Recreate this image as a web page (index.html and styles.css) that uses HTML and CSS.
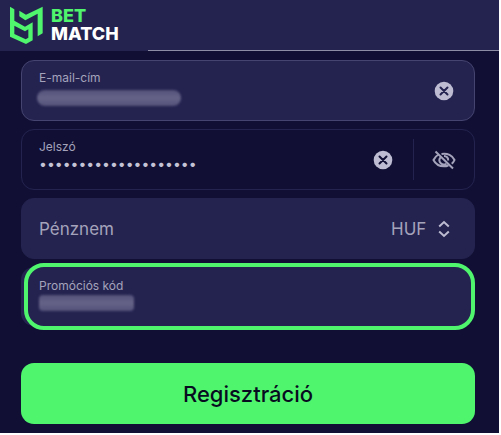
FILE: index.html
```html
<!DOCTYPE html>
<html lang="hu">
<head>
<meta charset="utf-8">
<meta name="viewport" content="width=device-width, initial-scale=1">
<title>BetMatch – Regisztráció</title>
<link rel="stylesheet" href="styles.css">
</head>
<body>
<div class="page">
  <header class="header">
    <a class="brand" href="#" aria-label="BetMatch">
      <svg class="brand-mark" viewBox="24 15 108 117" aria-hidden="true">
        <path fill-rule="evenodd" d="M30 17L43 25V59L75 77L98 64V118L78 129L30 107ZM43 74V99L77 115L85 110V85L75 91Z"/>
        <path d="M58 29L78 41L128 17V97L113 106V38L76 58L58 46Z"/>
      </svg>
      <span class="brand-name"><span class="brand-bet">BET</span><span>MATCH</span></span>
    </a>
  </header>
  <form class="form">
    <div class="field field-outlined">
      <div class="field-main">
        <label class="label" for="email">E-mail-cím</label>
        <div class="masked"><input class="input" id="email" type="text" value=""><span class="smudge smudge-email"></span></div>
      </div>
      <button class="icon-button" type="button" aria-label="Törlés">
        <svg class="icon-clear" viewBox="0 0 20 20"><circle cx="10" cy="10" r="9.3"/><path d="M6.500 6.500l7 7M13.500 6.500l-7 7"/></svg>
      </button>
    </div>
    <div class="field field-dark">
      <div class="field-main">
        <label class="label" for="password">Jelszó</label>
        <input class="input password" id="password" type="password" value="12345678901234567890">
      </div>
      <button class="icon-button" type="button" aria-label="Törlés">
        <svg class="icon-clear icon-clear-dark" viewBox="0 0 20 20"><circle cx="10" cy="10" r="9.3"/><path d="M6.500 6.500l7 7M13.500 6.500l-7 7"/></svg>
      </button>
      <span class="divider"></span>
      <button class="icon-button" type="button" aria-label="Jelszó megjelenítése">
        <svg class="icon-eye" viewBox="0 0 24 20"><path d="M6.500 4.500C4.200 5.800 2.500 7.700 1.500 10c2 4 6 6.300 10.500 6.300 1.500 0 3-.3 4.300-.8M9.500 3.900C15.500 2.800 20.600 5.500 22.500 10c-.6 1.500-1.500 2.700-2.800 3.700M8.300 7.700a4.300 4.300 0 0 0 6 6M12 5.900a4.200 4.200 0 0 1 4.200 4.600M3.500 1.500l17.500 17"/></svg>
      </button>
    </div>
    <div class="field">
      <label class="currency-label" for="currency">Pénznem</label>
      <select class="currency" id="currency"><option>HUF</option></select>
      <svg class="icon-sort" viewBox="0 0 14 18" aria-hidden="true"><path d="M2.200 6.500L7 2l4.800 4.500M2.200 11.500L7 16l4.800-4.500"/></svg>
    </div>
    <div class="field field-promo">
      <div class="field-main">
        <label class="label" for="promo">Promóciós kód</label>
        <div class="masked"><input class="input input-promo" id="promo" type="text" value=""><span class="smudge smudge-promo"></span></div>
      </div>
    </div>
    <button class="submit" type="submit">Regisztráció</button>
  </form>
</div>
</body>
</html>
```
FILE: styles.css
```css
* { box-sizing: border-box; }
body {
  margin: 0;
  padding: 0 2px 2px 0;
  background: #fff;
  font-family: Inter, "Noto Sans", sans-serif;
  color: #a4a3bb;
}
.page {
  min-height: calc(100vh - 2px);
  background: #111034;
  isolation: isolate;
}
.header {
  display: flex;
  height: 51px;
  padding-left: 8px;
  background: linear-gradient(#8d8da6, #8d8da6) 148px 100% / 100% 1px no-repeat #242350;
}
.brand {
  display: flex;
  align-items: center;
  gap: 7px;
  color: #fff;
  text-decoration: none;
}
.brand-mark { width: 36px; height: 39px; fill: #50f56e; }
.brand-name {
  display: flex;
  flex-direction: column;
  padding-bottom: 2px;
  font: 800 18px/18px Inter, sans-serif;
}
.brand-bet { color: #50f56e; }
.form {
  display: flex;
  flex-direction: column;
  gap: 8px;
  padding: 9px 24px 9px 21px;
}
.field {
  display: flex;
  align-items: center;
  height: 61px;
  padding: 0 20px 0 17px;
  border: 1px solid #242350;
  border-radius: 13px;
  background: #242350;
}
.field-outlined { border-color: #45436f; }
.field-dark { padding-right: 18px; background: #111034; }
.field-main { flex: 1; min-width: 0; }
.label { display: block; font-size: 12px; line-height: 16px; }
.input {
  display: block;
  width: 100%;
  height: 26px;
  padding: 0;
  border: 0;
  outline: 0;
  background: none;
  color: #c4c3d6;
  font: 14px/20px Inter, sans-serif;
}
.input-promo { height: 22px; }
.password { padding-bottom: 8px; }
.masked { position: relative; }
.smudge {
  position: absolute;
  height: 16px;
  background: linear-gradient(#54527a, #656387 50%, #54527a);
  filter: blur(1px);
}
.smudge-email { top: 4px; left: -2px; width: 144px; border-radius: 8px; }
.smudge-promo { top: 1px; left: 0; width: 95px; border-radius: 4px; }
.icon-button {
  display: flex;
  padding: 0;
  border: 0;
  background: none;
}
.icon-clear { width: 20px; height: 20px; fill: #bdbcd2; }
.icon-clear path { stroke: #242350; stroke-width: 2; stroke-linecap: round; }
.icon-clear-dark path { stroke: #111034; }
.divider { width: 1px; height: 41px; margin: 0 18px 0 20px; background: #242350; }
.icon-eye { width: 24px; height: 20px; fill: none; stroke: #a4a3bb; stroke-width: 2; }
.currency-label { flex: 1; font-size: 17px; }
.currency {
  padding: 0;
  border: 0;
  appearance: none;
  background: none;
  color: inherit;
  font: 17px/24px Inter, sans-serif;
}
.icon-sort { width: 14px; height: 18px; margin: 0 3px 0 10px; fill: none; stroke: #bdbcd2; stroke-width: 2; }
.field-promo {
  position: relative;
  height: 67px;
  margin: -4px 0 0 3px;
  padding-left: 11px;
  border: 4px solid #50f56e;
  border-radius: 20px;
}
.field-promo::before {
  content: "";
  position: absolute;
  z-index: -1;
  inset: 0 0 0 -7px;
  border-radius: 13px;
  background: #242350;
}
.submit {
  height: 61px;
  margin-top: 25px;
  border: 0;
  border-radius: 13px;
  background: #50f56e;
  color: #080c20;
  font: 500 22px/28px Inter, sans-serif;
}
```
